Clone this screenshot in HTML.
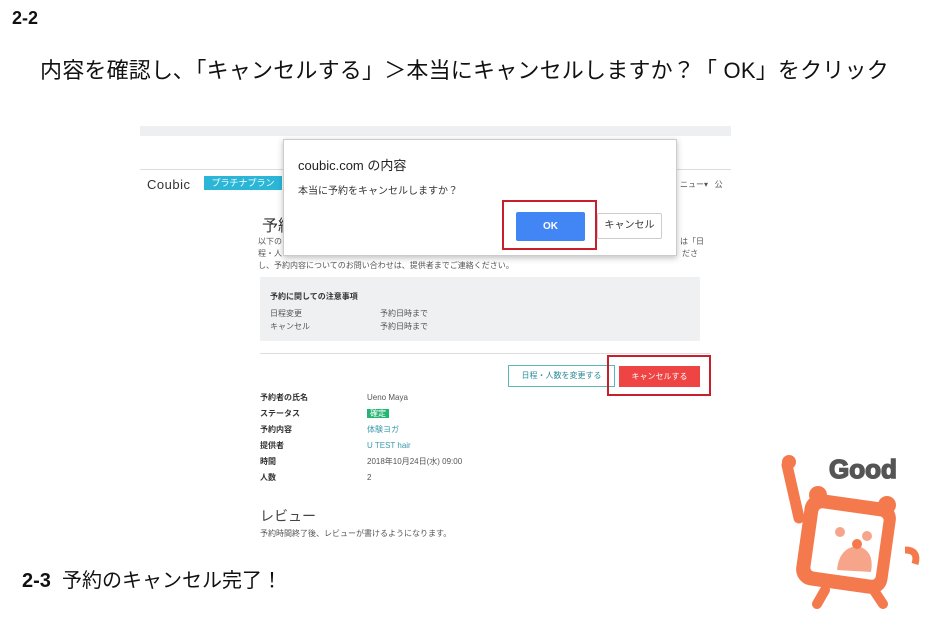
<!DOCTYPE html>
<html><head><meta charset="utf-8"><style>
*{margin:0;padding:0;box-sizing:border-box}
body{width:940px;height:628px;background:#fff;position:relative;overflow:hidden;font-family:"Liberation Sans","Noto Sans CJK JP",sans-serif;color:#222}
.a{position:absolute;white-space:nowrap}
.s{font-size:8px;color:#555}
</style></head><body>
<div class="a" style="left:12px;top:8px;font-size:18px;font-weight:bold;color:#111">2-2</div>
<div class="a" style="left:40px;top:53px;font-size:22px;color:#111;letter-spacing:0.2px">内容を確認し､「キャンセルする」＞本当にキャンセルしますか？「 OK」をクリック</div>

<div class="a" style="left:140px;top:126px;width:591px;height:10px;background:#eeeff1"></div>
<div class="a" style="left:140px;top:169px;width:591px;height:1px;background:#ddd"></div>
<div class="a" style="left:147px;top:177px;font-size:13px;color:#333;letter-spacing:0.5px">Coubic</div>
<div class="a" style="left:204px;top:176px;width:78px;height:14px;background:#2bb6d8;color:#fff;font-size:9px;line-height:14px;text-align:center">プラチナプラン</div>
<div class="a" style="left:680px;top:179px;font-size:8px;color:#555">ニュー▾ &nbsp; 公</div>

<div class="a" style="left:262px;top:212px;font-size:16px;color:#333">予約</div>
<div class="a s" style="left:258px;top:236px">以下の</div>
<div class="a s" style="left:680px;top:236px">は「日</div>
<div class="a s" style="left:258px;top:248px">程・人</div>
<div class="a s" style="left:682px;top:248px">ださ</div>
<div class="a s" style="left:258px;top:260px">し、予約内容についてのお問い合わせは、提供者までご連絡ください。</div>

<div class="a" style="left:260px;top:277px;width:440px;height:64px;background:#eff0f2"></div>
<div class="a" style="left:270px;top:291px;font-size:8px;font-weight:bold;color:#333">予約に関しての注意事項</div>
<div class="a s" style="left:270px;top:308px">日程変更</div>
<div class="a s" style="left:380px;top:308px">予約日時まで</div>
<div class="a s" style="left:270px;top:321px">キャンセル</div>
<div class="a s" style="left:380px;top:321px">予約日時まで</div>
<div class="a" style="left:260px;top:353px;width:450px;height:1px;background:#ddd"></div>

<div class="a" style="left:508px;top:365px;width:107px;height:22px;border:1px solid #5bb6c0;font-size:8px;color:#2a8a99;line-height:20px;text-align:center">日程・人数を変更する</div>
<div class="a" style="left:619px;top:366px;width:81px;height:21px;background:#ef4444;color:#fff;font-size:8px;line-height:21px;text-align:center">キャンセルする</div>
<div class="a" style="left:607px;top:355px;width:104px;height:41px;border:2px solid #c8202a"></div>

<div class="a" style="left:260px;top:390px;font-size:8px;font-weight:bold;color:#333;line-height:16px">予約者の氏名<br>ステータス<br>予約内容<br>提供者<br>時間<br>人数</div>
<div class="a s" style="left:367px;top:390px;line-height:16px">Ueno Maya<br><span style="background:#22b573;color:#fff;padding:0 3px">確定</span><br><span style="color:#3a9aad">体験ヨガ</span><br><span style="color:#3a9aad">U TEST hair</span><br>2018年10月24日(水) 09:00<br>2</div>

<div class="a" style="left:260px;top:506px;font-size:14px;color:#444">レビュー</div>
<div class="a s" style="left:260px;top:528px">予約時間終了後、レビューが書けるようになります。</div>

<div class="a" style="left:283px;top:139px;width:394px;height:117px;background:#fff;border:1px solid #ccc;box-shadow:0 2px 6px rgba(0,0,0,.25)"></div>
<div class="a" style="left:298px;top:155px;font-size:13px;color:#222">coubic.com の内容</div>
<div class="a" style="left:298px;top:182px;font-size:10px;color:#333">本当に予約をキャンセルしますか？</div>
<div class="a" style="left:516px;top:212px;width:69px;height:29px;background:#4285f4;border-radius:2px;color:#fff;font-size:10px;font-weight:bold;line-height:29px;text-align:center">OK</div>
<div class="a" style="left:597px;top:213px;width:65px;height:26px;border:1px solid #ccc;border-radius:2px;font-size:10px;color:#333;line-height:24px;text-align:center">キャンセル</div>
<div class="a" style="left:502px;top:200px;width:95px;height:50px;border:2px solid #c8202a"></div>

<div class="a" style="left:22px;top:564px;font-size:20px;color:#111"><b>2-3</b>&nbsp; 予約のキャンセル完了！</div>

<svg class="a" style="left:765px;top:440px" width="170" height="170" viewBox="0 0 170 170">
<text x="64" y="38" font-family="Liberation Sans" font-weight="bold" font-size="26" fill="#555" stroke="#555" stroke-width="1.5">Good</text>
<path d="M22 25 L34 78" stroke="#f47a4e" stroke-width="11" stroke-linecap="round"/>
<circle cx="24" cy="22" r="7" fill="#f47a4e"/>
<rect x="35" y="58" width="92" height="92" rx="16" fill="#f47a4e" transform="rotate(8 81 104)"/>
<circle cx="53" cy="55" r="9" fill="#f47a4e"/><circle cx="122" cy="65" r="9" fill="#f47a4e"/>
<rect x="49" y="72" width="66" height="64" rx="4" fill="#fff" transform="rotate(8 82 104)"/>
<circle cx="75" cy="92" r="5" fill="#f7a58a"/><circle cx="102" cy="96" r="5" fill="#f7a58a"/>
<path d="M72 130 Q74 108 92 106 Q110 110 106 132 Z" fill="#f7a58a"/>
<circle cx="92" cy="104" r="5" fill="#f47a4e"/>
<path d="M140 110 q14 0 10 14" stroke="#f47a4e" stroke-width="7" fill="none"/>
<path d="M60 150 l-8 14 M110 152 l8 12" stroke="#f47a4e" stroke-width="10" stroke-linecap="round"/>
</svg>
</body></html>
